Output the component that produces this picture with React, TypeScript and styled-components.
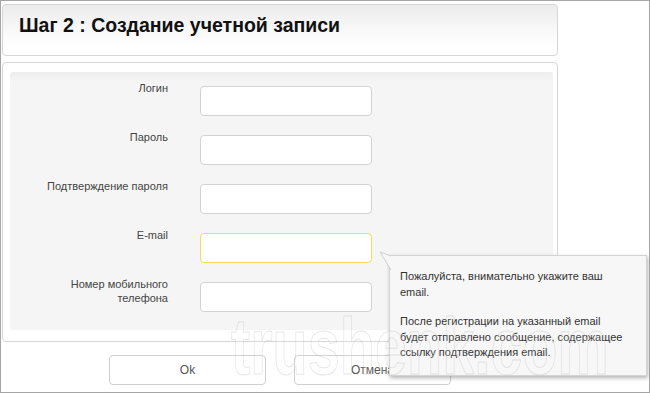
import React from "react";
import styled, { createGlobalStyle } from "styled-components";

const GlobalStyle = createGlobalStyle`
  html, body {
    margin: 0;
    padding: 0;
    background: #fff;
  }
  body {
    font-family: "Liberation Sans", Arial, sans-serif;
    color: #333;
  }
`;

const Frame = styled.div`
  position: relative;
  box-sizing: border-box;
  width: 650px;
  height: 393px;
  padding: 3px 0 0 1px;
  border: 1px solid #a5a5a5;
  overflow: hidden;
`;

const Header = styled.div`
  box-sizing: border-box;
  width: 556px;
  height: 52px;
  padding: 9px 16px 0;
  border: 1px solid #d6d6d6;
  border-radius: 4px;
  background: linear-gradient(#ececec, #ffffff 80%);
`;

const Title = styled.h1`
  margin: 0;
  font-size: 19.5px;
  line-height: 22px;
  font-weight: bold;
  color: #111;
`;

const FormPanel = styled.div`
  box-sizing: border-box;
  width: 556px;
  height: 280px;
  margin-top: 6px;
  padding: 9px 4px 11px 7px;
  border: 1px solid #d6d6d6;
  border-radius: 4px;
  background: #fff;
`;

const FormBody = styled.div`
  box-sizing: border-box;
  height: 100%;
  padding: 14px 0 0;
  border-radius: 3px;
  background: linear-gradient(#eeeeee, #f5f5f5 10px);
  display: grid;
  grid-template-columns: 158px 172px;
  column-gap: 32px;
  row-gap: 19px;
  align-content: start;
`;

const Label = styled.label`
  margin-top: -5px;
  text-align: right;
  font-size: 11px;
  line-height: 14px;
  color: #444;
`;

const Field = styled.input<{ $active?: boolean }>`
  box-sizing: border-box;
  width: 172px;
  height: 30px;
  margin: 0;
  border: 1px solid ${(p) => (p.$active ? "#f0dc5a" : "#d2d2d2")};
  border-radius: 4px;
  background: #fff;
  outline: none;
  font: inherit;
`;

const Buttons = styled.div`
  width: 556px;
  display: flex;
  justify-content: center;
  gap: 28px;
  margin-top: 13px;
`;

const Button = styled.button`
  box-sizing: border-box;
  width: 157px;
  height: 30px;
  border: 1px solid #cfcfcf;
  border-radius: 4px;
  background: #fff;
  font-family: "Liberation Sans", Arial, sans-serif;
  font-size: 12px;
  color: #555;
`;

const Tooltip = styled.div`
  position: absolute;
  left: 388px;
  top: 254px;
  box-sizing: border-box;
  width: 258px;
  height: 121px;
  padding: 13px 10px 0 10px;
  background: #f7f7f7;
  border: 1px solid #d4d4d4;
  box-shadow: 1px 2px 4px rgba(0, 0, 0, 0.3);
  font-size: 11px;
  line-height: 15.5px;
  color: #333;
  z-index: 2;

  p {
    margin: 0 0 14px;
    white-space: nowrap;
  }
`;

const Tail = styled.svg`
  position: absolute;
  left: -11px;
  top: -4px;
  overflow: visible;
`;

const Watermark = styled.div`
  position: absolute;
  left: 230px;
  top: 306px;
  font-family: "Liberation Sans", sans-serif;
  font-weight: bold;
  font-size: 80px;
  line-height: 1;
  white-space: nowrap;
  transform: scaleX(0.72);
  transform-origin: left top;
  color: rgba(255, 255, 255, 0.1);
  -webkit-text-stroke: 1px rgba(195, 195, 195, 0.4);
  pointer-events: none;
  z-index: 3;
`;

const fields = [
    { label: "Логин" },
    { label: "Пароль" },
    { label: "Подтверждение пароля" },
    { label: "E-mail", active: true },
    { label: <>Номер мобильного<br />телефона</> },
];

const App: React.FC = () => {
    return (
      <>
        <GlobalStyle />
        <Frame>
          <Header>
            <Title>Шаг 2 : Создание учетной записи</Title>
          </Header>
          <FormPanel>
            <FormBody>
              {fields.map((f, i) => (
                <React.Fragment key={i}>
                  <Label>{f.label}</Label>
                  <Field $active={f.active} />
                </React.Fragment>
              ))}
            </FormBody>
          </FormPanel>
          <Buttons>
            <Button>Ok</Button>
            <Button>Отмена</Button>
          </Buttons>
          <Tooltip>
            <Tail width="12" height="20">
              <polygon points="12,4 1,0 12,18" fill="#f7f7f7" />
              <polyline points="12,4 1,0 12,18" fill="none" stroke="#cfcfcf" strokeWidth="1" />
            </Tail>
            <p>Пожалуйста, внимательно укажите ваш<br />email.</p>
            <p>После регистрации на указанный email<br />будет отправлено сообщение, содержащее<br />ссылку подтверждения email.</p>
          </Tooltip>
          <Watermark>trushenk.com</Watermark>
        </Frame>
      </>
    );
};

export default App;
